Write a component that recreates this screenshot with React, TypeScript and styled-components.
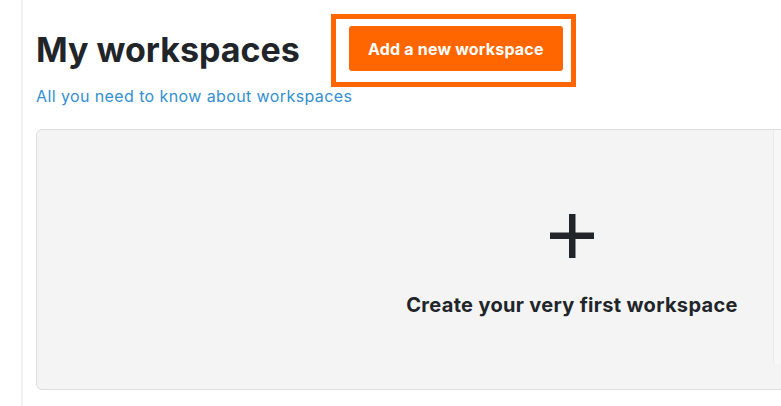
import React from "react";
import styled, { createGlobalStyle } from "styled-components";

const Global = createGlobalStyle`
  html, body { margin: 0; padding: 0; background: #ffffff; overflow: hidden; }
  body { font-family: Inter, "Liberation Sans", Arial, sans-serif; color: #212529; }
  * { box-sizing: border-box; }
`;

const Page = styled.div`
  margin-left: 21px;
  border-left: 2px solid #f2f2f2;
  padding-left: 13px;
  min-height: 406px;
  width: 1200px;
`;

const Header = styled.div`
  display: flex;
  align-items: flex-start;
  gap: 31px;
  padding-top: 14px;
`;

const Heading = styled.h1`
  margin: 14px 0 0;
  font-family: Inter, "Liberation Sans", Arial, sans-serif;
  font-size: 34px;
  line-height: 43px;
  font-weight: 700;
  color: #212529;
  white-space: nowrap;
`;

const InfoLink = styled.a`
  display: block;
  font-size: 16px;
  line-height: 18px;
  letter-spacing: 0.4px;
  color: #338fcf;
  text-decoration: none;
  white-space: nowrap;
`;

const FocusRing = styled.div`
  border: 5px solid #ff6600;
  padding: 7px 8px 11px 13px;
`;

const PrimaryButton = styled.button`
  display: flex;
  align-items: center;
  justify-content: center;
  width: 214px;
  height: 45px;
  border: none;
  border-radius: 3px;
  background: #ff6600;
  color: #ffffff;
  font-family: Inter, "Liberation Sans", Arial, sans-serif;
  font-size: 16px;
  letter-spacing: 0.2px;
  font-weight: 700;
  cursor: pointer;
  white-space: nowrap;
`;

const EmptyCard = styled.div`
  margin-top: 24px;
  width: 1072px;
  height: 261px;
  background: #f4f4f4;
  border: 1px solid #dedede;
  border-radius: 6px;
  display: flex;
  flex-direction: column;
  align-items: center;
  padding-top: 84px;
  position: relative;
`;

const PlusIcon = styled.svg`
  width: 44px;
  height: 44px;
  display: block;
`;

const CardLabel = styled.div`
  margin-top: 35px;
  font-size: 20px;
  line-height: 24px;
  letter-spacing: 0.32px;
  font-weight: 700;
  color: #212529;
  white-space: nowrap;
`;

const EdgeStrip = styled.div`
  position: absolute;
  left: 736px;
  top: 0;
  width: 12px;
  height: 234px;
  background: #f7f7f7;
  border-left: 1px solid #ebebeb;
`;

export default function App() {
  return (
    <>
      <Global />
      <Page>
        <Header>
          <Heading>My workspaces</Heading>
          <FocusRing>
            <PrimaryButton>Add a new workspace</PrimaryButton>
          </FocusRing>
        </Header>
        <InfoLink href="#">All you need to know about workspaces</InfoLink>
        <EmptyCard>
          <EdgeStrip />
          <PlusIcon viewBox="0 0 44 44">
            <rect x="19" y="0" width="6.5" height="44" fill="#212529" />
            <rect x="0" y="18.5" width="44" height="6.5" fill="#212529" />
          </PlusIcon>
          <CardLabel>Create your very first workspace</CardLabel>
        </EmptyCard>
      </Page>
    </>
  );
}
